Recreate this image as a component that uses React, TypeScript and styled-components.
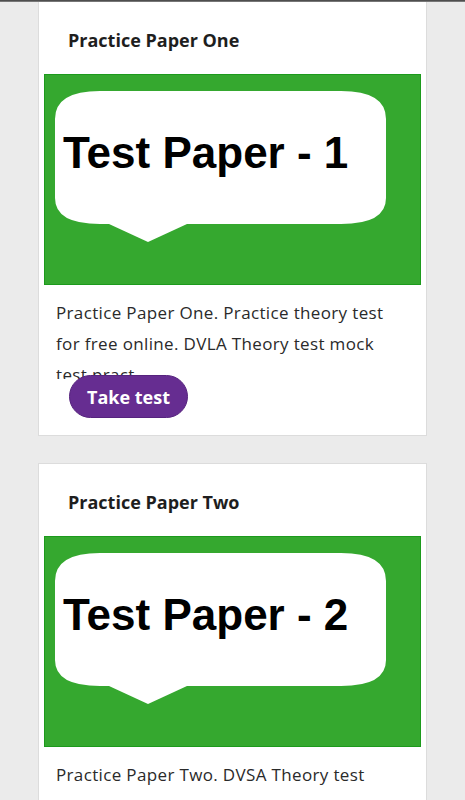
import React from "react";
import styled, { createGlobalStyle } from "styled-components";

const Global = createGlobalStyle`
  html, body { margin: 0; padding: 0; background: #ebebeb; }
  body { font-family: "Open Sans", "Liberation Sans", sans-serif; }
`;

const TopLine = styled.div`
  position: fixed;
  top: 0;
  left: 0;
  right: 0;
  height: 2px;
  background: linear-gradient(#3a3a3a, #8a8a8a);
  z-index: 10;
`;

const Page = styled.main`
  display: flex;
  flex-direction: column;
  align-items: center;
  gap: 27px;
  padding: 1px 0 40px;
`;

const Card = styled.article`
  box-sizing: border-box;
  width: 389px;
  background: #fff;
  border: 1px solid #dcdcdc;
  padding: 0 5px 17px;
`;

const Title = styled.h2`
  margin: 0;
  padding: 26px 0 0 24px;
  height: 72px;
  box-sizing: border-box;
  font-size: 18px;
  font-weight: 700;
  color: #1e1e1e;
  line-height: 24px;
`;

const Thumb = styled.svg`
  display: block;
  width: 377px;
  height: 211px;
`;

const Body = styled.p`
  margin: 12px 12px 0 12px;
  height: 82px;
  overflow: hidden;
  font-size: 17px;
  line-height: 31px;
  color: #2a2a2a;
  letter-spacing: 0.35px;
`;

const Actions = styled.div`
  margin-top: -4px;
  padding-left: 25px;
`;

const TakeTest = styled.button`
  display: inline-flex;
  align-items: center;
  justify-content: center;
  height: 43px;
  padding: 0 17px;
  border-radius: 22px;
  border: 1px solid #56237e;
  background: #662d91;
  color: #fff;
  font-family: "Open Sans", "Liberation Sans", sans-serif;
  font-weight: 700;
  font-size: 18px;
  cursor: pointer;
`;

const bubblePath =
  "M56 17 H297 Q342 17 342 45 V124 Q342 150 297 150 H143 L104 168 L65 150 H56 Q11 150 11 124 V45 Q11 17 56 17 Z";

function PaperImage({ n }: { n: number }) {
  return (
    <Thumb viewBox="0 0 377 211">
      <rect x="0.5" y="0.5" width="376" height="210" fill="#35a82f" stroke="#1c9a1c" />
      <path d={bubblePath} fill="#fff" />
      <text
        x="19"
        y="94"
        fontFamily="'Liberation Sans', Arial, sans-serif"
        fontWeight="700"
        fontSize="44"
        fill="#000"
      >
        {`Test Paper - ${n}`}
      </text>
    </Thumb>
  );
}

const papers = [
  {
    n: 1,
    title: "Practice Paper One",
    text: "Practice Paper One. Practice theory test for free online. DVLA Theory test mock test pract...",
  },
  {
    n: 2,
    title: "Practice Paper Two",
    text: "Practice Paper Two. DVSA Theory test practice for free. Pool of 50 Questions, mock test pract...",
  },
];

export default function App() {
  return (
    <>
      <Global />
      <TopLine />
      <Page>
        {papers.map((p) => (
          <Card key={p.n}>
            <Title>{p.title}</Title>
            <PaperImage n={p.n} />
            <Body>{p.text}</Body>
            <Actions>
              <TakeTest>Take test</TakeTest>
            </Actions>
          </Card>
        ))}
      </Page>
    </>
  );
}
